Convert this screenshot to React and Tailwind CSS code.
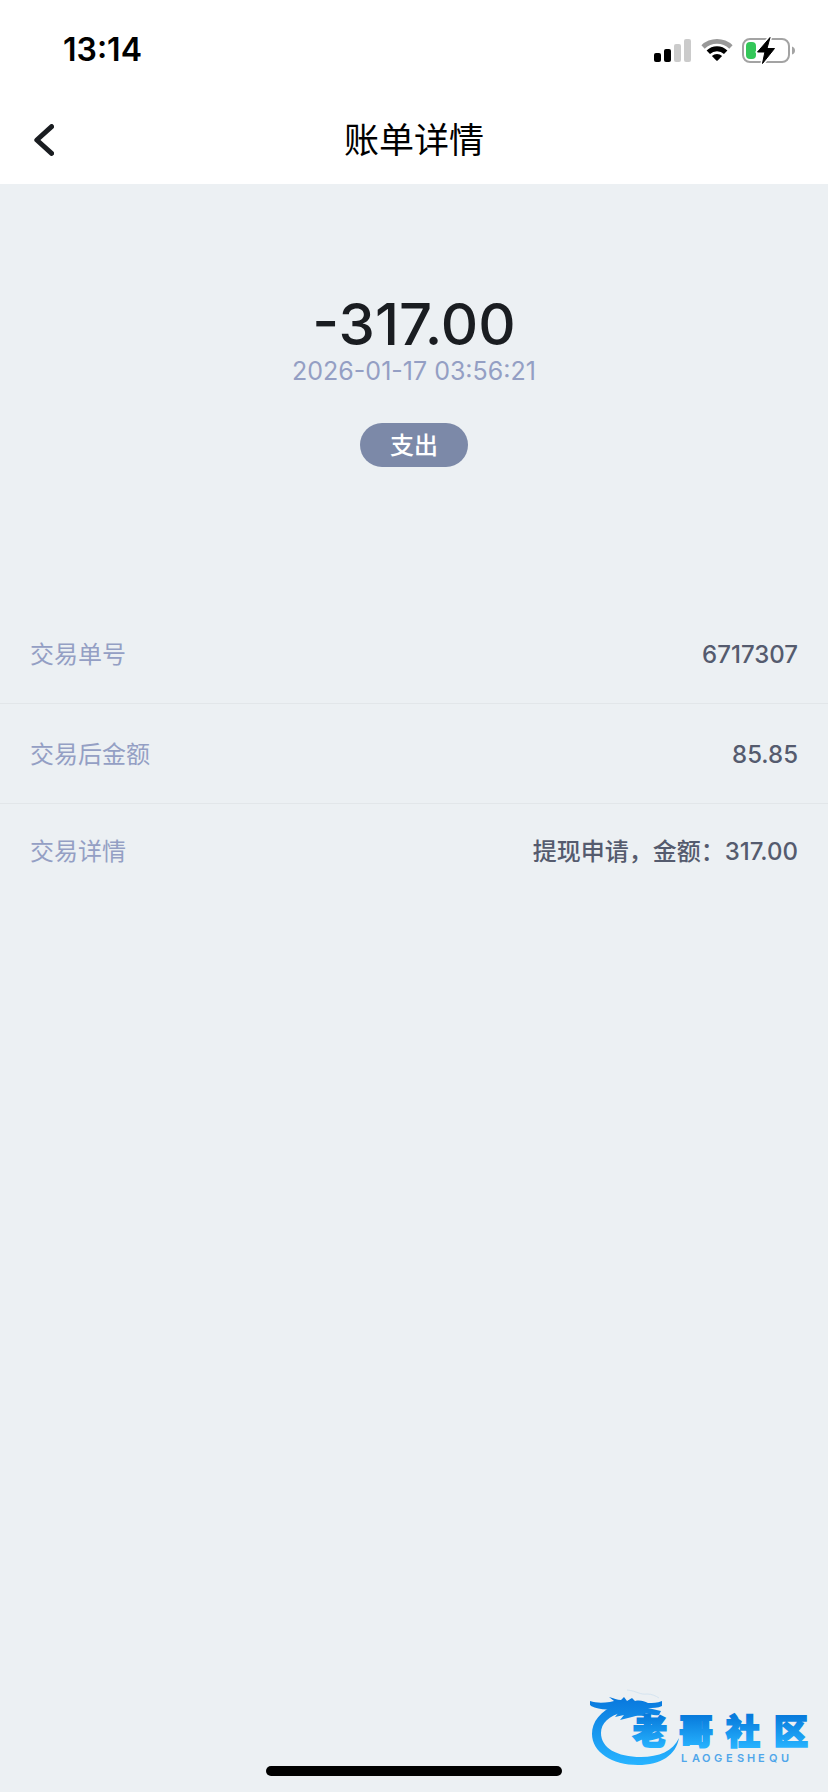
import React from 'react';

const rows = [
    { label: '交易单号', value: '6717307' },
    { label: '交易后金额', value: '85.85' },
    { label: '交易详情', value: '提现申请，金额：317.00' },
];

const SignalIcon = () => (
    <svg className="w-[38px] h-6" viewBox="0 0 38 24" aria-hidden="true">
        <rect x="0" y="15" width="7" height="9" rx="2" fill="#000" />
        <rect x="10" y="11" width="7" height="13" rx="2" fill="#000" />
        <rect x="20" y="6" width="7" height="18" rx="2" fill="#cbcbcb" />
        <rect x="30" y="1" width="7" height="23" rx="2" fill="#cbcbcb" />
    </svg>
);

const WifiIcon = () => (
    <svg className="w-8 h-6" viewBox="0 0 32 24" aria-hidden="true">
        <path d="M0.4 7.3a22.3 22.3 0 0 1 31.2 0l-3.3 3.4a17.6 17.6 0 0 0-24.6 0z" fill="#999" />
        <path d="M5.6 12.6a14.9 14.9 0 0 1 20.8 0l-3.4 3.4a10.1 10.1 0 0 0-14 0z" fill="#000" />
        <path d="M10.9 18a7.4 7.4 0 0 1 10.2 0l-4.4 4.5q-.7.7-1.4 0z" fill="#000" />
    </svg>
);

const BatteryIcon = () => (
    <svg className="w-[54px] h-7" viewBox="0 0 54 28" aria-hidden="true">
        <rect x="1" y="3" width="46" height="23" rx="7" fill="none" stroke="#a3a3a3" strokeWidth="2" />
        <path d="M50 10.5q3 1 3 4t-3 4z" fill="#a3a3a3" />
        <rect x="4" y="6" width="10" height="17" rx="4" fill="#34c759" />
        <path d="M28 1.5 15.5 16h7.4L20.5 27.5 32.5 12.5H25z" fill="#000" stroke="#fff" strokeWidth="4" strokeLinejoin="round" />
        <path d="M28 1.5 15.5 16h7.4L20.5 27.5 32.5 12.5H25z" fill="#000" stroke="#000" strokeWidth="1" strokeLinejoin="round" />
    </svg>
);

const BackIcon = () => (
    <svg className="w-5 h-8" viewBox="0 0 20 32" fill="none" aria-hidden="true">
        <path d="M17.6 2.6 2.8 16l14.8 13.4" stroke="#1a1d21" strokeWidth="5" strokeLinecap="round" strokeLinejoin="round" />
    </svg>
);

const StatusBar = () => (
    <div className="flex h-[100px] items-center justify-between pl-[63px] pr-8">
        <span className="text-[32px] leading-10 font-semibold text-black">13:14</span>
        <div className="flex items-center gap-[9px]">
            <SignalIcon />
            <WifiIcon />
            <BatteryIcon />
        </div>
    </div>
);

const Header = () => (
    <header className="grid h-[84px] grid-cols-[1fr_auto_1fr] items-center px-[34px] pb-1">
        <button type="button" aria-label="返回" className="flex h-12 w-12 items-center">
            <BackIcon />
        </button>
        <h1 className="text-[35px] leading-[48px] font-normal text-black">账单详情</h1>
    </header>
);

// Community logo: dragon ring, four-character name and its pinyin
const Watermark = () => (
    <svg className="absolute right-4 bottom-6 h-[80px] w-[222px]" viewBox="0 0 222 80" role="img" aria-label="老哥社区">
        <defs>
            <linearGradient id="dragon" gradientUnits="userSpaceOnUse" x1="0" y1="10" x2="0" y2="76">
                <stop offset="0" stopColor="#0878dd" />
                <stop offset="1" stopColor="#27b3ff" />
            </linearGradient>
            <linearGradient id="name" gradientUnits="userSpaceOnUse" x1="0" y1="28" x2="0" y2="60">
                <stop offset="0" stopColor="#087bdc" />
                <stop offset="1" stopColor="#27b3ff" />
            </linearGradient>
        </defs>
        <g fill="url(#dragon)">
            <path d="M27 16C10 23 2 34 2 46c0 18 20 31 46 31 23 0 38-10 41-27-6 13-20 19-38 19-24 0-40-9-40-24 0-10 8-17 22-21z" />
            <path d="M0 13c6 2 12 2 20 1l4-1-5-4c5 1 8 3 12 3l3-3 3 4 5-3 3 3c5-1 9 0 13 2 5 0 9 0 14-2v5c-4 2-9 2-14 2l13 3-2 4c-5 1-9-1-14-2l3 3c-7 0-11-1-16 1l-12 3 4-5-9 2 4-5-11 2 4-5c-7 1-15 0-21-3-2-2-2-3-1-5z" />
        </g>
        <path d="M37 2c10 1 13 5 20 4 5 0 9 2 12 4" fill="none" stroke="#d5e4f0" strokeWidth="1" />
        <text x="43 89 136 184" y="56" fontSize="34" fontWeight="900" fill="url(#name)" stroke="url(#name)" strokeWidth="2">老哥社区</text>
        <text x="91 102 112 124 136 147 157 168 179 191" y="74" fontSize="11" fontWeight="600" fill="#4fa6ea">LAOGESHEQU</text>
    </svg>
);

const App = () => {
    return (
        <div className="relative flex min-h-screen flex-col bg-[#ecf0f3] font-['Inter','Noto_Sans_CJK_SC',sans-serif]">
            <div className="bg-white">
                <StatusBar />
                <Header />
            </div>

            <main className="flex-1">
                <section className="flex flex-col items-center pt-[108px]">
                    <p className="text-[58px] leading-[64px] font-medium text-[#1a1d21]">-317.00</p>
                    <time dateTime="2026-01-17T03:56:21" className="text-[25px] leading-[30px] text-[#949fc4]">2026-01-17 03:56:21</time>
                    <span className="mt-[37px] flex h-11 items-center rounded-full bg-[#7c89a8] px-[30px] pt-[2px] text-2xl font-medium text-white">支出</span>
                </section>

                <dl className="mt-[137px]">
                    {rows.map((row) => (
                        <div key={row.label} className="flex h-[100px] items-center justify-between border-b border-[#e2e6e9] px-[30px] pt-[3px] text-2xl last:h-[92px] last:border-b-0">
                            <dt className="text-[#949fc4]">{row.label}</dt>
                            <dd className="font-medium text-[#555b6e]">{row.value}</dd>
                        </div>
                    ))}
                </dl>
            </main>

            <div className="mx-auto mb-4 h-[10px] w-[296px] rounded-full bg-black" />
            <Watermark />
        </div>
    );
};

export default App;
